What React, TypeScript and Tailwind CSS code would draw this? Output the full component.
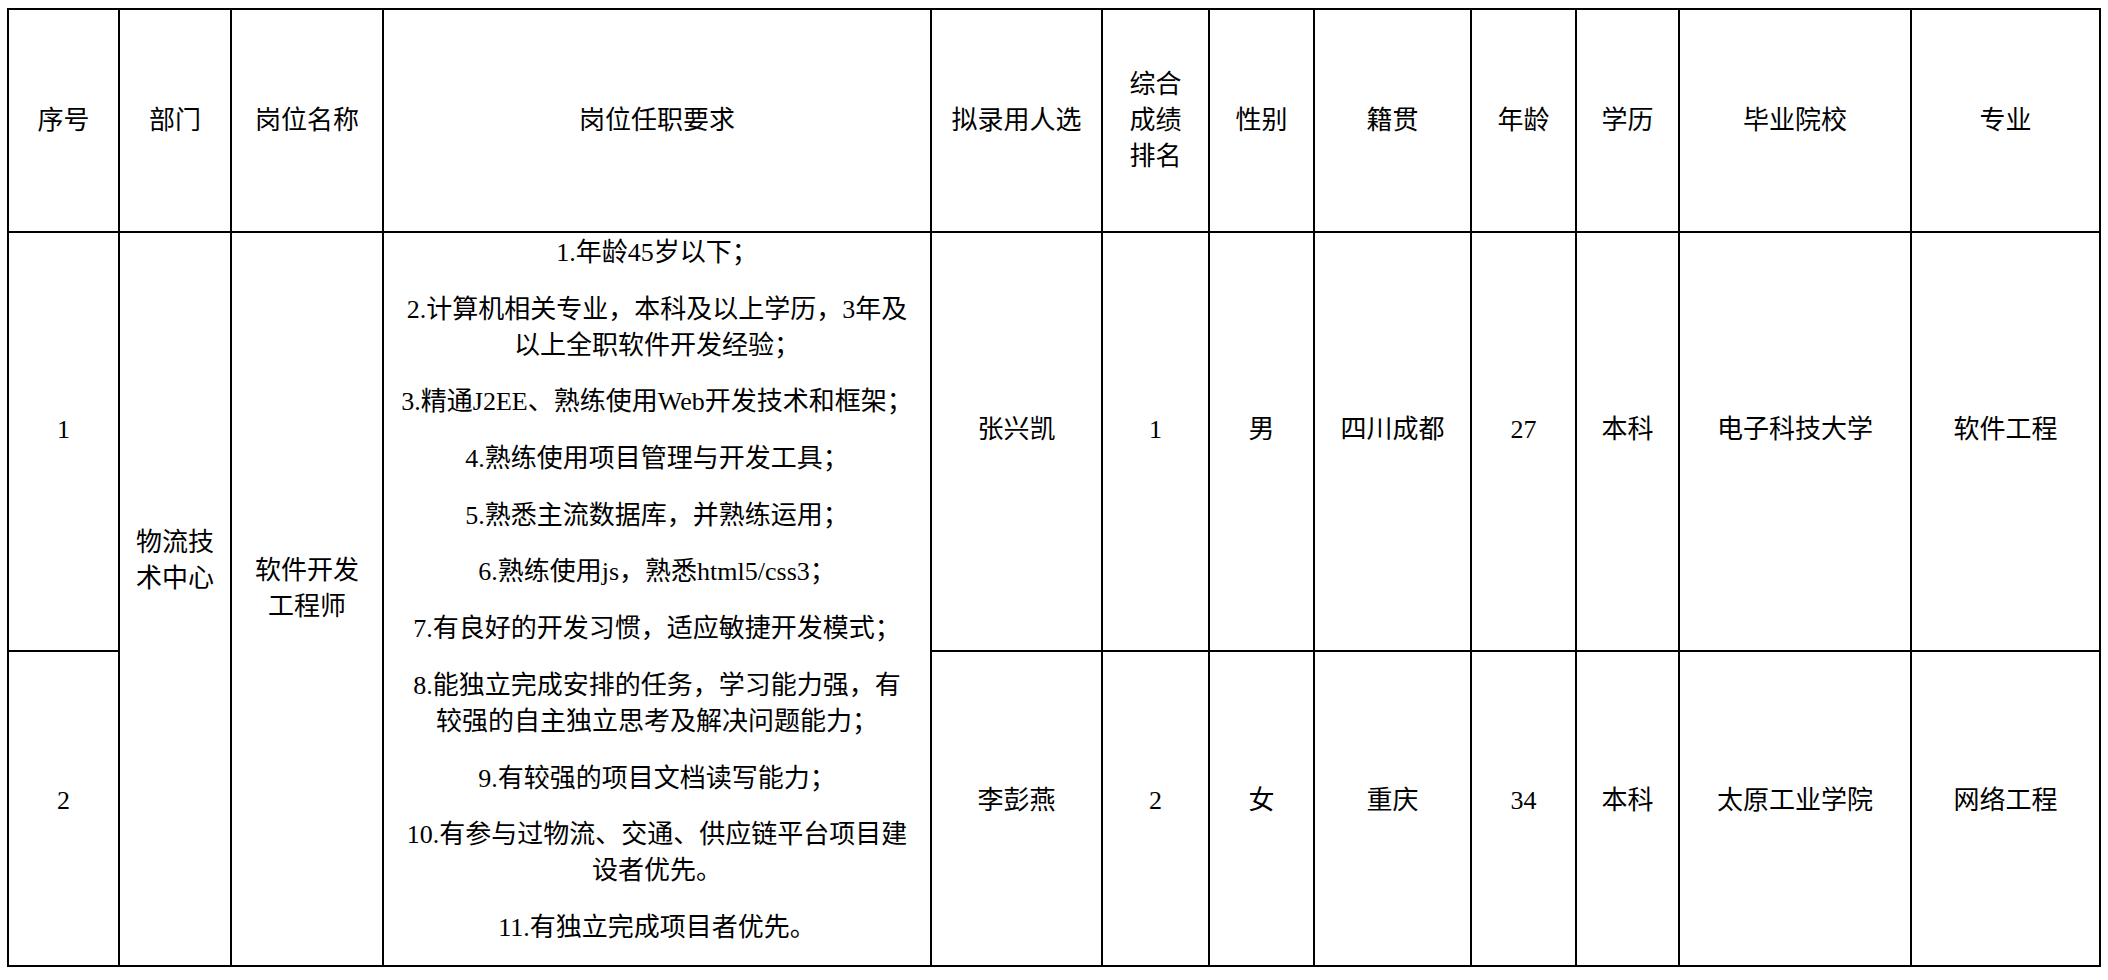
const FONT = "font-['Liberation_Serif','Noto_Sans_CJK_SC',serif]";

const headers = [
  "序号",
  "部门",
  "岗位名称",
  "岗位任职要求",
  "拟录用人选",
  "综合\n成绩\n排名",
  "性别",
  "籍贯",
  "年龄",
  "学历",
  "毕业院校",
  "专业",
];

const requirements = [
  ["1.年龄45岁以下；"],
  ["2.计算机相关专业，本科及以上学历，3年及", "以上全职软件开发经验；"],
  ["3.精通J2EE、熟练使用Web开发技术和框架；"],
  ["4.熟练使用项目管理与开发工具；"],
  ["5.熟悉主流数据库，并熟练运用；"],
  ["6.熟练使用js，熟悉html5/css3；"],
  ["7.有良好的开发习惯，适应敏捷开发模式；"],
  ["8.能独立完成安排的任务，学习能力强，有", "较强的自主独立思考及解决问题能力；"],
  ["9.有较强的项目文档读写能力；"],
  ["10.有参与过物流、交通、供应链平台项目建", "设者优先。"],
  ["11.有独立完成项目者优先。"],
];

const candidates = [
  ["张兴凯", "1", "男", "四川成都", "27", "本科", "电子科技大学", "软件工程"],
  ["李彭燕", "2", "女", "重庆", "34", "本科", "太原工业学院", "网络工程"],
];

function Lines({ text }: { text: string }) {
  const parts = text.split("\n");
  return (
    <>
      {parts.map((p, i) => (
        <span key={i} className="block whitespace-nowrap">
          {p}
        </span>
      ))}
    </>
  );
}

export default function App() {
  const cell = "bg-white flex flex-col items-center justify-center text-center";

  return (
    <div className={`min-h-screen bg-white text-black ${FONT} text-[26px] leading-[36px]`}>
      <div className="ml-[7px] pt-[8px]">
        <div className="grid w-fit grid-cols-[109px_110px_150px_546px_169px_105px_103px_155px_103px_101px_230px_187px] grid-rows-[221px_417px_313px] gap-[2px] bg-black p-[2px]">
          {headers.map((h) => (
            <div key={h} className={cell}>
              <Lines text={h} />
            </div>
          ))}

          {/* row 1 */}
          <div className={`${cell} pb-[23px]`}>1</div>
          <div className={`${cell} row-span-2 pb-[76px]`}>
            <Lines text={"物流技\n术中心"} />
          </div>
          <div className={`${cell} row-span-2 pb-[20px]`}>
            <Lines text={"软件开发\n工程师"} />
          </div>
          <div className="row-span-2 flex flex-col items-stretch gap-[20.7px] bg-white pt-[2px] text-center">
            {requirements.map((para, i) => (
              <div key={i}>
                {para.map((line, j) => (
                  <span key={j} className="block whitespace-nowrap">
                    {line}
                  </span>
                ))}
              </div>
            ))}
          </div>
          {candidates[0].map((v, i) => (
            <div key={`a${i}`} className={`${cell} pb-[23px]`}>
              {v}
            </div>
          ))}

          {/* row 2 */}
          <div className={`${cell} pb-[16px]`}>2</div>
          {candidates[1].map((v, i) => (
            <div key={`b${i}`} className={`${cell} pb-[16px]`}>
              {v}
            </div>
          ))}
        </div>
      </div>
    </div>
  );
}
